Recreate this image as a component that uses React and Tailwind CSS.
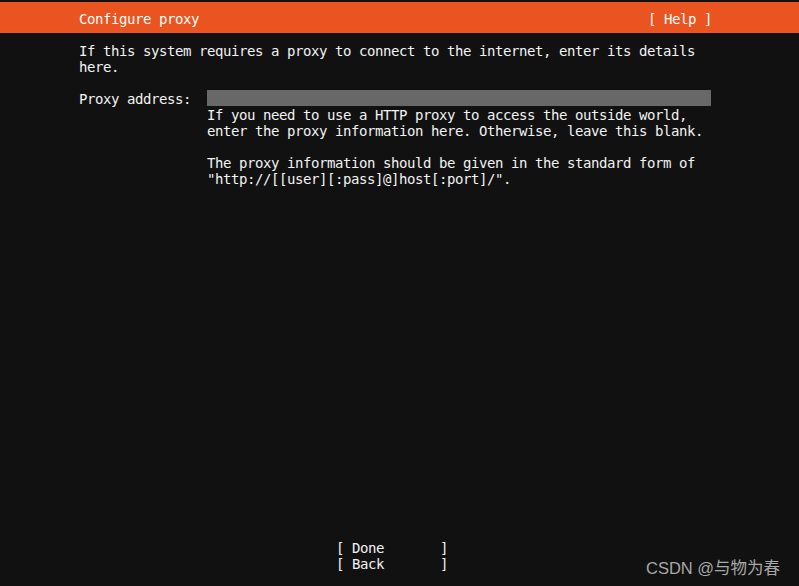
export default function App() {
  return (
    <div className="relative w-[799px] h-[586px] bg-[#111111] text-[#f2f2f2] flex flex-col overflow-hidden">
      <div
        className="mt-[2px] h-[31px] pt-[3px] bg-[#e95420] text-white flex items-center justify-between pl-[79px] pr-[87px] text-[14px] leading-4 tracking-[-0.43px] whitespace-pre font-['DejaVu_Sans_Mono',monospace]"
      >
        <span>Configure proxy</span>
        <span>[ Help ]</span>
      </div>
      <div className="pt-[10px] pl-[79px] text-[14px] leading-4 tracking-[-0.43px] whitespace-pre font-['DejaVu_Sans_Mono',monospace]">
        <div>If this system requires a proxy to connect to the internet, enter its details</div>
        <div>here.</div>
        <div className="h-4" />
        <div className="flex">
          <div className="w-[128px] shrink-0">Proxy address:</div>
          <div className="w-[504px] flex flex-col">
            <div className="h-4 -mt-px mb-px bg-[#686868]" />
            <div>If you need to use a HTTP proxy to access the outside world,</div>
            <div>enter the proxy information here. Otherwise, leave this blank.</div>
            <div className="h-4" />
            <div>The proxy information should be given in the standard form of</div>
            <div>"http://[[user][:pass]@]host[:port]/".</div>
          </div>
        </div>
      </div>
      <div className="flex-1" />
      <div className="pl-[336px] pb-[14px] text-[14px] leading-4 tracking-[-0.43px] whitespace-pre font-['DejaVu_Sans_Mono',monospace]">
        <div>[ Done       ]</div>
        <div>[ Back       ]</div>
      </div>
      <div className="absolute left-[646px] top-[557px] text-[16.5px] leading-[22px] text-[#a8a8a8] whitespace-pre font-['Liberation_Sans','Noto_Sans_CJK_SC',sans-serif]">
        CSDN @与物为春
      </div>
    </div>
  );
}
